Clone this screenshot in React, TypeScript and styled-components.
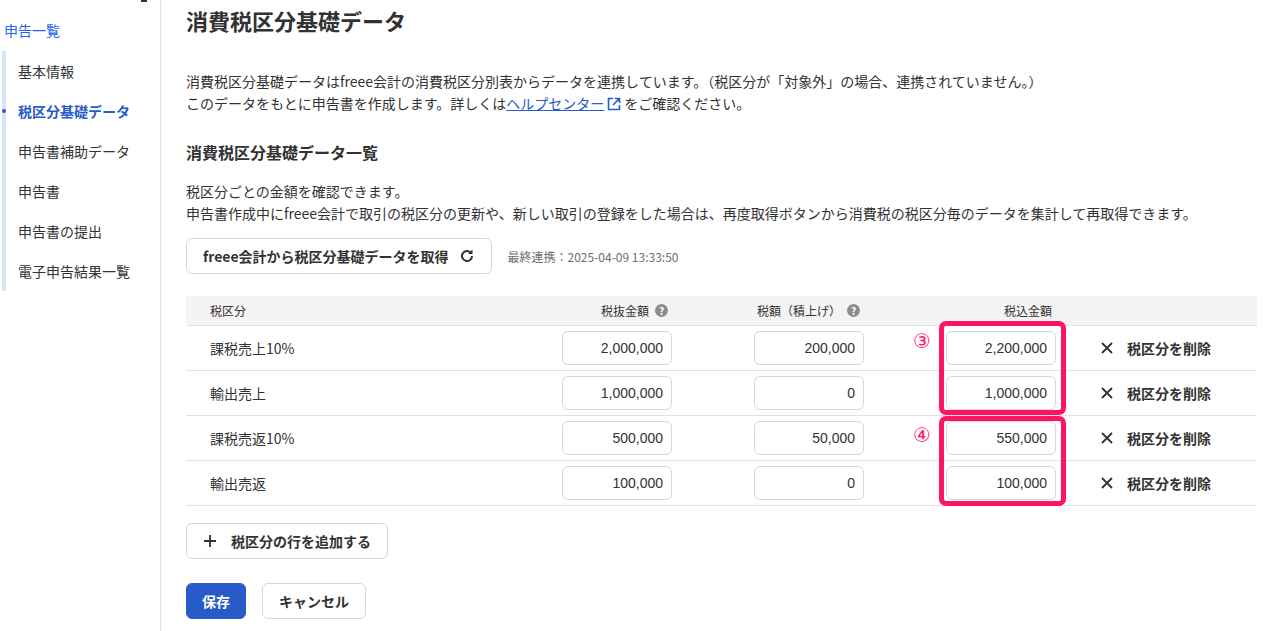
import React from "react";
import styled, { createGlobalStyle } from "styled-components";

const G = createGlobalStyle`
  html,body{margin:0;padding:0;background:#fff;overflow:hidden;}
  body{font-family:"Noto Sans CJK JP","Noto Sans",sans-serif;color:#323232;}
`;
const Page = styled.div`display:flex;height:631px;`;
const Side = styled.nav`width:160px;border-right:1px solid #e2e2e2;flex-shrink:0;position:relative;`;
const Top = styled.div`color:#2864f0;font-size:14px;padding:20px 0 0 4px;height:20px;line-height:20px;`;
const SubList = styled.div`margin:11px 0 0 2px;border-left:4px solid #d6e3fc;padding:0;display:flex;flex-direction:column;`;
const SubItem = styled.div<{ $a?: boolean }>`
  height:40px;line-height:40px;font-size:14px;padding-left:12px;position:relative;
  color:${p => p.$a ? "#285ac8" : "#323232"};font-weight:${p => p.$a ? 700 : 400};
  ${p => p.$a ? `&:before{content:"";position:absolute;left:-4px;top:18px;width:4px;height:4px;border-radius:2px;background:#285ac8;}` : ""}
`;
const Mark = styled.div`position:absolute;left:141px;top:0;width:6px;height:2px;background:#333;`;
const Main = styled.main`padding:0 0 0 25px;flex:1;`;
const H1 = styled.h1`margin:4px 0 0;font-size:22px;line-height:32px;font-weight:700;`;
const P = styled.p`margin:0;font-size:14px;line-height:22px;`;
const Desc = styled(P)`margin-top:34px;`;
const Link = styled.a`color:#285ac8;text-decoration:underline;`;
const H2 = styled.h2`margin:26px 0 0;font-size:16px;line-height:24px;font-weight:700;`;
const Desc2 = styled(P)`margin-top:16px;`;
const FetchRow = styled.div`display:flex;align-items:center;gap:16px;margin-top:14px;`;
const Btn = styled.button`
  font-family:inherit;font-size:14px;font-weight:700;color:#323232;background:#fff;
  border:1px solid #d7d7d7;border-radius:6px;height:36px;padding:0 16px;display:inline-flex;align-items:center;gap:10px;
`;
const Stamp = styled.span`font-size:12px;color:#6e6e6e;`;
const TableWrap = styled.div`position:relative;margin-top:22px;width:1071px;`;
const Row = styled.div<{ $head?: boolean }>`
  display:grid;grid-template-columns:376px 110px 82px 110px 82px 110px 1fr;align-items:center;
  height:${p => p.$head ? 30 : 45}px;border-bottom:1px solid #e2e2e2;box-sizing:border-box;
  background:${p => p.$head ? "#f5f4f4" : "#fff"};font-size:${p => p.$head ? 12 : 14}px;
`;
const Label = styled.div`padding-left:24px;`;
const HeadCell = styled.div`white-space:nowrap;padding-right:4px;display:flex;justify-content:flex-end;align-items:center;gap:6px;`;
const Help = styled.span`display:inline-flex;flex-shrink:0;width:13px;height:13px;border-radius:50%;background:#8c8c8c;color:#fff;font-size:10px;font-weight:700;align-items:center;justify-content:center;`;
const Input = styled.div`
  height:34px;border:1px solid #d7d7d7;border-radius:6px;box-sizing:border-box;
  text-align:right;line-height:32px;padding-right:8px;font-family:"Liberation Sans",sans-serif;font-size:14px;
`;
const Gap = styled.div``;
const Del = styled.div`display:flex;align-items:center;gap:14px;padding-left:45px;font-weight:700;font-size:14px;white-space:nowrap;`;
const RedBox = styled.div`position:absolute;left:753px;width:127px;border:5px solid #ff1464;border-radius:7px;box-sizing:border-box;`;
const Num = styled.div`position:absolute;left:727px;color:#ff1464;font-size:20px;line-height:22px;font-family:"DejaVu Sans",sans-serif;`;
const AddBtn = styled(Btn)`margin-top:17px;gap:14px;`;
const Actions = styled.div`display:flex;gap:16px;margin-top:24px;`;
const Primary = styled(Btn)`background:#285ac8;border-color:#285ac8;color:#fff;padding:0 15px;`;

const rows = [
  ["課税売上10%", "2,000,000", "200,000", "2,200,000"],
  ["輸出売上", "1,000,000", "0", "1,000,000"],
  ["課税売返10%", "500,000", "50,000", "550,000"],
  ["輸出売返", "100,000", "0", "100,000"],
];

const X = () => (
  <svg width="12" height="12" viewBox="0 0 12 12"><path d="M1 1L11 11M11 1L1 11" stroke="#323232" strokeWidth="1.8" /></svg>
);

export default function App() {
  return (
    <Page>
      <G />
      <Side>
        <Mark />
        <Top>申告一覧</Top>
        <SubList>
          <SubItem>基本情報</SubItem>
          <SubItem $a>税区分基礎データ</SubItem>
          <SubItem>申告書補助データ</SubItem>
          <SubItem>申告書</SubItem>
          <SubItem>申告書の提出</SubItem>
          <SubItem>電子申告結果一覧</SubItem>
        </SubList>
      </Side>
      <Main>
        <H1>消費税区分基礎データ</H1>
        <Desc>消費税区分基礎データはfreee会計の消費税区分別表からデータを連携しています。（税区分が「対象外」の場合、連携されていません。）<br />
          このデータをもとに申告書を作成します。詳しくは<Link>ヘルプセンター</Link>
          <svg width="16" height="16" viewBox="0 0 16 16" style={{ verticalAlign: "-3px", margin: "0 2px" }}><path d="M7 2.5H2.5v11h11V9M9 2.5h4.5V7M13.5 2.5L7 9" fill="none" stroke="#285ac8" strokeWidth="1.6" /></svg>
          をご確認ください。</Desc>
        <H2>消費税区分基礎データ一覧</H2>
        <Desc2>税区分ごとの金額を確認できます。<br />申告書作成中にfreee会計で取引の税区分の更新や、新しい取引の登録をした場合は、再度取得ボタンから消費税の税区分毎のデータを集計して再取得できます。</Desc2>
        <FetchRow>
          <Btn>freee会計から税区分基礎データを取得
            <svg width="16" height="16" viewBox="0 0 16 16"><path d="M13 8a5 5 0 1 1-1.5-3.6" fill="none" stroke="#323232" strokeWidth="2" /><path d="M13.5 1.5v4.5H9z" fill="#323232" /></svg>
          </Btn>
          <Stamp>最終連携：2025-04-09 13:33:50</Stamp>
        </FetchRow>
        <TableWrap>
          <Row $head>
            <Label>税区分</Label>
            <HeadCell>税抜金額<Help>?</Help></HeadCell>
            <Gap />
            <HeadCell>税額（積上げ）<Help>?</Help></HeadCell>
            <Gap />
            <HeadCell>税込金額</HeadCell>
            <div />
          </Row>
          {rows.map(r => (
            <Row key={r[0]}>
              <Label>{r[0]}</Label>
              <Input>{r[1]}</Input>
              <Gap />
              <Input>{r[2]}</Input>
              <Gap />
              <Input>{r[3]}</Input>
              <Del><X />税区分を削除</Del>
            </Row>
          ))}
          <RedBox style={{ top: 25, height: 94 }} />
          <RedBox style={{ top: 120, height: 90 }} />
          <Num style={{ top: 34 }}>③</Num>
          <Num style={{ top: 128 }}>④</Num>
        </TableWrap>
        <AddBtn>
          <svg width="14" height="14" viewBox="0 0 14 14"><path d="M7 1v12M1 7h12" stroke="#323232" strokeWidth="1.8" /></svg>
          税区分の行を追加する</AddBtn>
        <Actions>
          <Primary>保存</Primary>
          <Btn>キャンセル</Btn>
        </Actions>
      </Main>
    </Page>
  );
}
